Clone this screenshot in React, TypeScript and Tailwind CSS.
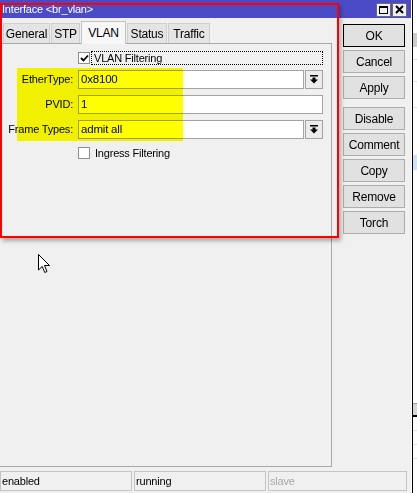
import React from "react";

const tabs = [
  { name: "General", w: "w-[47px]" },
  { name: "STP", w: "w-[29px]" },
  { name: "VLAN", w: "w-[45px]", active: true },
  { name: "Status", w: "w-[40px]" },
  { name: "Traffic", w: "w-[42px]" },
];

function CheckBox({ checked }: { checked?: boolean }) {
  return (
    <div className="w-[12px] h-[12px] border border-[#8f8f8f] bg-white flex items-center justify-center shrink-0">
      {checked && (
        <svg width="9" height="8" viewBox="0 0 9 8">
          <path d="M1 4 L3.5 6.5 L8 1.5" stroke="#000" strokeWidth="1.8" fill="none" />
        </svg>
      )}
    </div>
  );
}

function DropIcon() {
  return (
    <svg width="8" height="9" viewBox="0 0 8 9">
      <rect x="0" y="0" width="8" height="1.5" fill="#000" />
      <rect x="2.5" y="2.5" width="3" height="2.5" fill="#000" />
      <path d="M0 4.5 L8 4.5 L4 8.5 Z" fill="#000" />
    </svg>
  );
}

function Field({ value, drop }: { value: string; drop?: boolean }) {
  return (
    <div className="flex gap-[1px] h-[19px]">
      <div className="flex-1 h-full border border-[#a3a3a3] bg-white flex items-center pl-[2px] text-[11.5px]">
        {value}
      </div>
      {drop && (
        <div className="w-[18px] h-full border border-[#a3a3a3] bg-[#ececec] flex items-center justify-center">
          <DropIcon />
        </div>
      )}
    </div>
  );
}

function SideButton({ label, primary }: { label: string; primary?: boolean }) {
  return (
    <div
      className={
        primary
          ? "h-[23px] border border-black bg-[#e1e1e1] flex items-center justify-center"
          : "h-[23px] border border-[#adadad] bg-[#e1e1e1] flex items-center justify-center"
      }
    >
      {label}
    </div>
  );
}

export default function App() {
  return (
    <div className="relative w-[417px] h-[493px] overflow-hidden bg-[#f0f0f0] flex text-[11px] leading-none text-black tracking-[-0.2px] font-['Liberation_Sans',Arial,sans-serif]">
      {/* dialog window */}
      <div className="w-[412px] flex flex-col border-r border-white">
        {/* title bar */}
        <div className="h-[18px] bg-[#4b4bc8] flex items-center justify-between pl-[2px] pr-[4px]">
          <span className="text-white">Interface &lt;br_vlan&gt;</span>
          <div className="flex gap-[1px] pt-[1px]">
            <div className="w-[15px] h-[14px] bg-[#f0f0f0] border border-[#6b6b6b] flex items-center justify-center">
              <div className="w-[9px] h-[8px] border border-black border-t-2" />
            </div>
            <div className="w-[15px] h-[14px] bg-[#f0f0f0] border border-[#6b6b6b] flex items-center justify-center">
              <svg width="9" height="9" viewBox="0 0 9 9">
                <path d="M1 1 L8 8 M8 1 L1 8" stroke="#000" strokeWidth="2" />
              </svg>
            </div>
          </div>
        </div>

        {/* body */}
        <div className="h-[453px] flex">
          <div className="w-[332px] flex flex-col pt-[3px]">
            {/* tabs */}
            <div className="h-[22px] flex items-end pl-[3px] gap-[1px]">
              {tabs.map((t) =>
                t.active ? (
                  <div
                    key={t.name}
                    className={`${t.w} h-[23px] -mb-[1px] relative z-10 bg-[#f7f7f7] border border-b-0 border-[#c2c2c2] flex items-center justify-center text-[12px]`}
                  >
                    {t.name}
                  </div>
                ) : (
                  <div
                    key={t.name}
                    className={`${t.w} h-[20px] bg-[#e4e4e4] border border-b-0 border-[#cfcfcf] flex items-center justify-center text-[12px]`}
                  >
                    {t.name}
                  </div>
                )
              )}
            </div>

            {/* tab page */}
            <div className="h-[424px] border-t border-r border-b border-[#a9a9a9] flex flex-col pr-[8px]">
              <div className="mt-[7px] h-[14px] flex items-center">
                <div className="w-[78px]" />
                <CheckBox checked />
                <div className="ml-[1px] flex-1 h-[14px] border border-dotted border-black flex items-center pl-[2px]">
                  VLAN Filtering
                </div>
              </div>

              <div className="mt-[5px] grid grid-cols-[73px_1fr] gap-x-[5px] gap-y-[6px] items-center">
                <span className="text-right">EtherType:</span>
                <Field value="0x8100" drop />
                <span className="text-right">PVID:</span>
                <Field value="1" />
                <span className="text-right">Frame Types:</span>
                <Field value="admit all" drop />
              </div>

              <div className="mt-[8px] h-[12px] flex items-center">
                <div className="w-[78px]" />
                <CheckBox />
                <span className="ml-[5px]">Ingress Filtering</span>
              </div>
            </div>
          </div>

          {/* action buttons */}
          <div className="ml-[11px] w-[62px] pt-[6px] flex flex-col gap-[3px] text-[12px]">
            <SideButton label="OK" primary />
            <SideButton label="Cancel" />
            <SideButton label="Apply" />
            <div className="h-[2px]" />
            <SideButton label="Disable" />
            <SideButton label="Comment" />
            <SideButton label="Copy" />
            <SideButton label="Remove" />
            <SideButton label="Torch" />
          </div>
        </div>

        {/* status bar */}
        <div className="h-[20px] flex gap-[2px] pr-[4px]">
          <div className="w-[132px] h-full border border-[#c4c4c4] flex items-center pl-[1px]">enabled</div>
          <div className="w-[132px] h-full border border-[#c4c4c4] flex items-center pl-[1px]">running</div>
          <div className="flex-1 h-full border border-[#c4c4c4] flex items-center pl-[1px] text-[#a8a8a8]">slave</div>
        </div>
      </div>

      {/* neighbouring list window edge */}
      <div className="flex-1 border-l border-black bg-white flex flex-col">
        <div className="h-[33px]" />
        <div className="h-[14px] bg-[#cdcdcd]" />
        <div className="h-[13px] border-b border-[#d8d8d8]" />
        <div className="h-[22px] border-b border-[#e0e0e0]" />
        <div className="h-[26px] border-b border-[#e0e0e0]" />
        <div className="h-[47px]" />
        <div className="h-[15px] bg-[#cce4f7]" />
        <div className="h-[233px]" />
        <div className="h-[12px] bg-[#d6d6d6] border-t border-[#9a9a9a]" />
        <div className="h-[2px] bg-black" />
        <div className="h-[14px] border-b border-[#e0e0e0]" />
        <div className="h-[14px] border-b border-[#e0e0e0]" />
        <div className="h-[14px] border-b border-[#e0e0e0]" />
      </div>

      {/* highlighter marks */}
      <div className="absolute left-[17px] top-[68px] w-[166px] h-[73px] bg-[#ffff00] mix-blend-multiply pointer-events-none" />
      <div className="absolute left-0 top-[3px] w-[339px] h-[235px] border-2 border-[#ff0000] shadow-[2px_3px_4px_rgba(0,0,0,0.3)] pointer-events-none" />

      {/* mouse pointer */}
      <svg className="absolute left-[38px] top-[254px]" width="13" height="20" viewBox="0 0 13 20">
        <path d="M0.5 0.5 L0.5 16 L4.2 12.4 L6.8 18.5 L9 17.5 L6.5 11.5 L11.5 11.5 Z" fill="#fff" stroke="#000" strokeWidth="1" strokeLinejoin="miter" />
      </svg>
    </div>
  );
}
